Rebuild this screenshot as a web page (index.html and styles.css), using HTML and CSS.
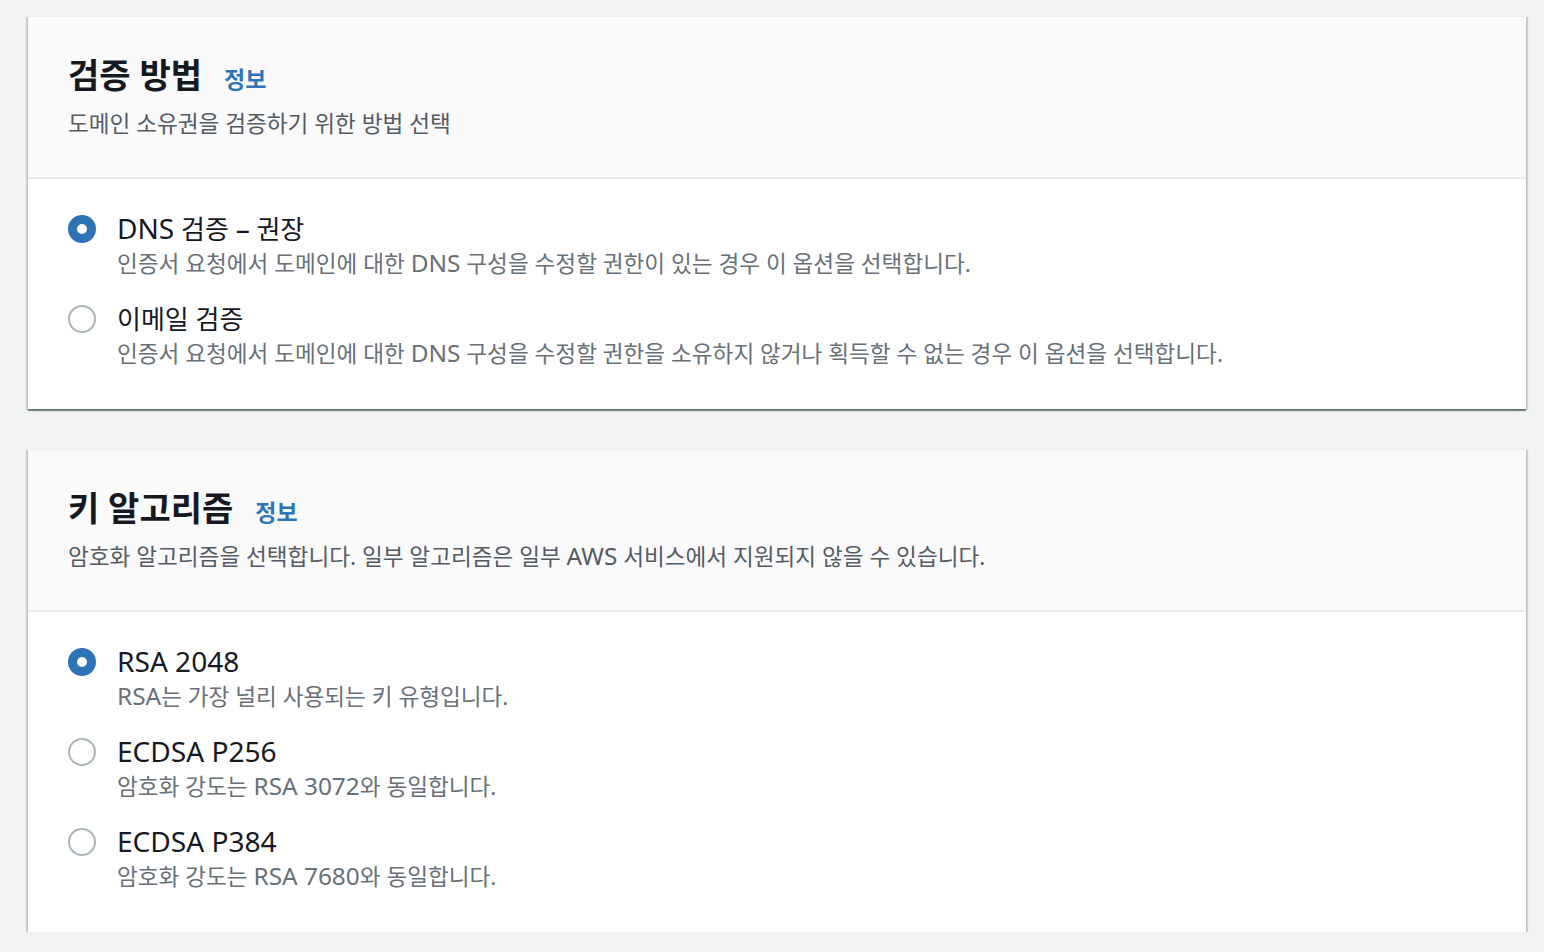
FILE: index.html
```html
<!DOCTYPE html>
<html lang="ko">
<head>
<meta charset="utf-8">
<title>인증서 요청</title>
<link rel="stylesheet" href="styles.css">
</head>
<body>
<main class="page">
  <section class="card">
    <header class="card-header">
      <div class="title-row">
        <h2 class="title">검증 방법</h2>
        <a class="info" href="#">정보</a>
      </div>
      <p class="subtitle">도메인 소유권을 검증하기 위한 방법 선택</p>
    </header>
    <div class="card-body">
      <div class="option">
        <span class="radio checked"></span>
        <div class="option-text">
          <div class="label"><span class="en">DNS</span> 검증 <span class="en">–</span> 권장</div>
          <div class="desc">인증서 요청에서 도메인에 대한 <span class="en">DNS</span> 구성을 수정할 권한이 있는 경우 이 옵션을 선택합니다.</div>
        </div>
      </div>
      <div class="option">
        <span class="radio"></span>
        <div class="option-text">
          <div class="label">이메일 검증</div>
          <div class="desc">인증서 요청에서 도메인에 대한 <span class="en">DNS</span> 구성을 수정할 권한을 소유하지 않거나 획득할 수 없는 경우 이 옵션을 선택합니다.</div>
        </div>
      </div>
    </div>
  </section>

  <section class="card">
    <header class="card-header">
      <div class="title-row">
        <h2 class="title">키 알고리즘</h2>
        <a class="info" href="#">정보</a>
      </div>
      <p class="subtitle">암호화 알고리즘을 선택합니다. 일부 알고리즘은 일부 <span class="en">AWS</span> 서비스에서 지원되지 않을 수 있습니다.</p>
    </header>
    <div class="card-body">
      <div class="option">
        <span class="radio checked"></span>
        <div class="option-text">
          <div class="label"><span class="en">RSA 2048</span></div>
          <div class="desc"><span class="en">RSA</span>는 가장 널리 사용되는 키 유형입니다.</div>
        </div>
      </div>
      <div class="option">
        <span class="radio"></span>
        <div class="option-text">
          <div class="label"><span class="en">ECDSA P256</span></div>
          <div class="desc">암호화 강도는 <span class="en">RSA 3072</span>와 동일합니다.</div>
        </div>
      </div>
      <div class="option">
        <span class="radio"></span>
        <div class="option-text">
          <div class="label"><span class="en">ECDSA P384</span></div>
          <div class="desc">암호화 강도는 <span class="en">RSA 7680</span>와 동일합니다.</div>
        </div>
      </div>
    </div>
  </section>
</main>
</body>
</html>
```

FILE: styles.css
```css
* { box-sizing: border-box; }

html, body {
  margin: 0;
  padding: 0;
  background: #f2f3f3;
}

body {
  font-family: "Noto Sans", "Noto Sans CJK KR", sans-serif;
  color: #16191f;
}

.page {
  padding: 16px 18px 0 28px;
  display: flex;
  flex-direction: column;
  gap: 40px;
}

.card {
  background: #ffffff;
  border-top: 1px solid #eaeded;
  box-shadow: 0 2px 1px 0 rgba(0, 28, 36, 0.45),
              2px 1px 1px 0 rgba(0, 28, 36, 0.15),
              -2px 1px 1px 0 rgba(0, 28, 36, 0.15);
}

.card-header {
  background: #fafafa;
  border-bottom: 2px solid #eaeded;
  padding: 38px 40px 38px 40px;
}

.title-row {
  display: flex;
  align-items: baseline;
  gap: 22px;
  height: 40px;
}

.title {
  margin: 0;
  font-size: 34px;
  font-weight: 700;
  line-height: 40px;
  color: #16191f;
}

.info {
  font-size: 23px;
  font-weight: 700;
  color: #2f74b8;
  text-decoration: none;
  line-height: 40px;
}

.subtitle {
  margin: 14px 0 0 0;
  font-size: 22.6px;
  line-height: 30px;
  color: #545b64;
}

.card-body {
  padding: 32px 40px 38px 40px;
  display: flex;
  flex-direction: column;
  gap: 20px;
}

.option {
  display: flex;
  align-items: flex-start;
  gap: 21px;
}

.radio {
  flex: none;
  width: 28px;
  height: 28px;
  margin-top: 4px;
  border-radius: 50%;
  border: 2px solid #aab7b8;
  background: #ffffff;
}

.radio.checked {
  border: 9px solid #2f73b7;
}

.option-text {
  display: flex;
  flex-direction: column;
}

.label {
  font-size: 26px;
  line-height: 36px;
  color: #16191f;
}

.desc {
  font-size: 22.6px;
  line-height: 34px;
  color: #687078;
}

.en {
  font-size: 1.08em;
  line-height: 1;
}
```
